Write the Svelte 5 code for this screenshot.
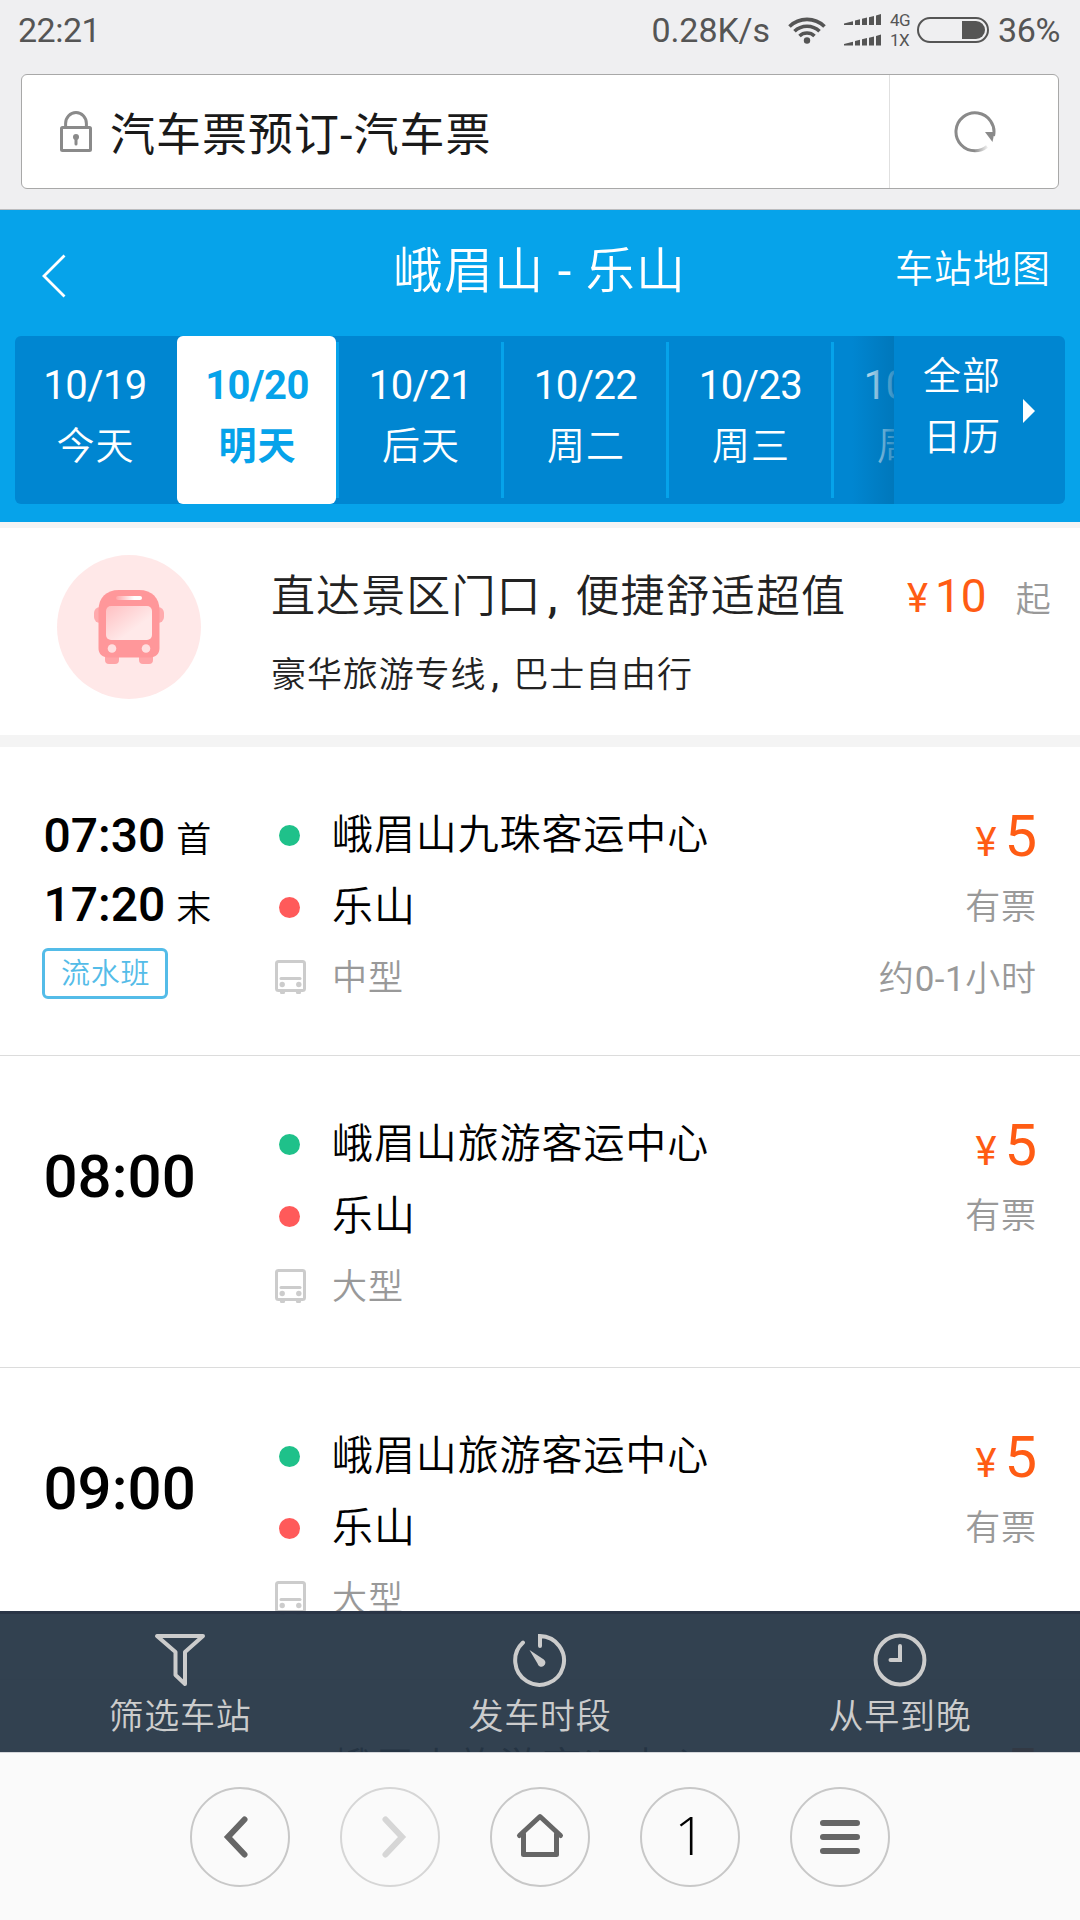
<script>
  const dates = [
    { date: "10/19", day: "今天" },
    { date: "10/20", day: "明天" },
    { date: "10/21", day: "后天" },
    { date: "10/22", day: "周二" },
    { date: "10/23", day: "周三" },
    { date: "10/24", day: "周四" },
  ];
  let activeDate = $state("10/20");

  const trips = [
    {
      first: "07:30",
      last: "17:20",
      tag: "流水班",
      from: "峨眉山九珠客运中心",
      to: "乐山",
      size: "中型",
      price: 5,
      hours: "0-1",
    },
    { time: "08:00", from: "峨眉山旅游客运中心", to: "乐山", size: "大型", price: 5 },
    { time: "09:00", from: "峨眉山旅游客运中心", to: "乐山", size: "大型", price: 5 },
    { time: "10:00", from: "峨眉山旅游客运中心", to: "乐山", size: "大型", price: 5 },
  ];
</script>

<div class="phone">
  <div class="browser-top">
    <div class="status">
      <span class="clock">22:21</span>
      <span class="speed">0.28K/s</span>
      <svg class="wifi" width="38" height="28" viewBox="0 0 38 28">
        <g fill="none" stroke="#555" stroke-width="3.6">
          <path d="M1.5 10.5A25 25 0 0 1 36.5 10.5" />
          <path d="M6.5 15.3A18 18 0 0 1 31.5 15.3" />
          <path d="M11.5 20A11 11 0 0 1 26.5 20" />
        </g>
        <circle cx="19" cy="24.5" r="3.2" fill="#555" />
      </svg>
      <svg class="signal" width="38" height="32" viewBox="0 0 38 32" fill="#555">
        {#each [0, 20.5] as y}
          <path
            transform="translate(0 {y})"
            d="M0 9.5L9 7.2V11H0zM11 6.5L16 5.2V11H11zM18 4.8L23 3.6V11H18zM25 3.2L30 2V11H25zM32 1.5L37 0V11H32z"
          />
        {/each}
      </svg>
      <span class="net"><span>4G</span><span>1X</span></span>
      <span class="battery"><span class="level"></span></span>
      <span class="percent">36%</span>
    </div>
    <div class="address">
      <svg class="lock" width="32" height="41" viewBox="0 0 32 41" fill="none" stroke="#8a8a8a" stroke-width="3">
        <path d="M5.6 16V12.5a10.4 11 0 0 1 20.8 0V16" />
        <rect x="1.5" y="16.5" width="29" height="23" rx="1" />
        <circle cx="16" cy="26" r="3" fill="#8a8a8a" stroke="none" />
        <path d="M16 26v7" stroke-linecap="round" />
      </svg>
      <span class="page-title">汽车票预订-汽车票</span>
      <button class="reload" aria-label="刷新">
        <svg width="42" height="42" viewBox="0 0 42 42">
          <defs>
            <linearGradient id="tail" x1="20" y1="0" x2="34" y2="0" gradientUnits="userSpaceOnUse">
              <stop offset="0" stop-color="#8a8a8a" />
              <stop offset="1" stop-color="#8a8a8a" stop-opacity="0.1" />
            </linearGradient>
          </defs>
          <path d="M39.5 25A19 19 0 1 0 21 39.8" fill="none" stroke="#8a8a8a" stroke-width="3" />
          <path d="M21 39.8A19 19 0 0 0 33 35.5" fill="none" stroke="url(#tail)" stroke-width="3" />
          <path d="M31 21H40.5L38.5 31z" fill="#8a8a8a" />
        </svg>
      </button>
    </div>
  </div>

  <div class="header">
    <div class="nav">
      <svg class="back" width="24" height="44" viewBox="0 0 24 44" fill="none" stroke="#fff" stroke-width="2.8">
        <path d="M22.5 1.5L2 22L22.5 42.5" />
      </svg>
      <h1>峨眉山 <span class="dash">-</span> 乐山</h1>
      <span class="map">车站地图</span>
    </div>
    <div class="dates">
      <div class="tabs">
        {#each dates as item (item.date)}
          <button
            class="tab"
            class:active={item.date === activeDate}
            onclick={() => (activeDate = item.date)}
          >
            <span class="label">
              <span class="date">{item.date}</span>
              <span class="day">{item.day}</span>
            </span>
            <i class="line"></i>
          </button>
        {/each}
        <div class="fade"></div>
      </div>
      <div class="calendar">
        <span>全部<br />日历</span>
        <i class="arrow"></i>
      </div>
    </div>
  </div>

  <div class="promo">
    <svg class="promo-icon" width="144" height="144" viewBox="0 0 144 144">
      <defs>
        <linearGradient id="glass" x1="0" y1="0" x2="1" y2="1">
          <stop offset="0" stop-color="#ffc0c2" />
          <stop offset="0.65" stop-color="#ffe9e9" />
        </linearGradient>
        <linearGradient id="plate">
          <stop offset="0" stop-color="#ffa5a8" />
          <stop offset="0.7" stop-color="#fff" />
        </linearGradient>
      </defs>
      <circle cx="72" cy="72" r="72" fill="#ffe8e8" />
      <rect x="37" y="52" width="70" height="16" rx="6" fill="#ffaaad" />
      <path d="M48 98h14v7a4 4 0 0 1-4 4h-6a4 4 0 0 1-4-4zM82 98h14v7a4 4 0 0 1-4 4h-6a4 4 0 0 1-4-4z" fill="#ffa3a6" />
      <path d="M62 35h20c13 0 20.500 8 20.500 20v38c0 6-4 9.500-9.500 9.500H51c-5.500 0-9.500-3.500-9.500-9.500V55c0-12 7.500-20 20.500-20z" fill="#ff979a" />
      <rect x="59" y="41" width="26" height="4" rx="2" fill="url(#plate)" />
      <rect x="49" y="51" width="46" height="34" rx="5" fill="url(#glass)" />
      <circle cx="55" cy="93.500" r="4.300" fill="#ffdfe0" />
      <circle cx="89" cy="93.500" r="4.300" fill="#ffdfe0" />
    </svg>
    <div class="promo-text">
      <p class="promo-title">直达景区门口<span class="comma">,</span>便捷舒适超值</p>
      <p class="promo-sub">豪华旅游专线<span class="comma">,</span>巴士自由行</p>
    </div>
    <div class="promo-price">
      <span class="yen">¥</span><span class="amount">10</span><span class="from">起</span>
    </div>
  </div>

  <div class="list">
    {#each trips as trip, i (i)}
      <div class="trip">
        <div class="times">
          {#if trip.time}
            <div class="time">{trip.time}</div>
          {:else}
            <div class="range">{trip.first}<small>首</small></div>
            <div class="range">{trip.last}<small>末</small></div>
            <span class="tag">{trip.tag}</span>
          {/if}
        </div>
        <div class="route">
          <div class="stop"><i class="dot green"></i>{trip.from}</div>
          <div class="stop"><i class="dot red"></i>{trip.to}</div>
          <div class="stop size">
            <svg width="31" height="35" viewBox="0 0 31 35" fill="none" stroke="#ccc" stroke-width="3">
              <rect x="1.500" y="1.500" width="28" height="29" rx="2" />
              <path d="M6 18.500h19" stroke-linecap="round" />
              <g fill="#ccc" stroke="none">
                <circle cx="7.200" cy="24.500" r="2.700" />
                <circle cx="23.800" cy="24.500" r="2.700" />
                <path d="M4.500 31h6l-1 3h-4zM20.500 31h6l-1 3h-4z" />
              </g>
            </svg>
            {trip.size}
          </div>
        </div>
        <div class="fare">
          <div class="price"><span class="yen">¥</span>{trip.price}</div>
          <div class="note">有票</div>
          {#if trip.hours}
            <div class="note">约<span class="hours">{trip.hours}</span>小时</div>
          {/if}
        </div>
      </div>
    {/each}

    <div class="toolbar">
      <div class="tool">
        <svg width="54" height="54" viewBox="0 0 54 54" fill="none" stroke="#ccc" stroke-width="4" stroke-linejoin="round">
          <path d="M4 3H50L32 19V51L22.500 42V19z" />
        </svg>
        筛选车站
      </div>
      <div class="tool">
        <svg width="54" height="54" viewBox="0 0 54 54" fill="none" stroke="#ccc" stroke-width="4" stroke-linecap="round">
          <path d="M27 13V3A24.400 24.400 0 1 1 10 9.500" />
          <path d="M16.500 17L30.800 26.500A4 4 0 1 1 24.500 30.500z" fill="#ccc" stroke="none" />
        </svg>
        发车时段
      </div>
      <div class="tool">
        <svg width="54" height="54" viewBox="0 0 54 54" fill="none" stroke="#ccc" stroke-width="4" stroke-linecap="round">
          <circle cx="27" cy="27" r="24.400" />
          <path d="M27 13V27H17.500" />
        </svg>
        从早到晚
      </div>
    </div>
  </div>

  <div class="browser-bottom">
    <button class="round" aria-label="后退">
      <svg width="60" height="60" viewBox="0 0 60 60" fill="none" stroke="#666" stroke-width="6" stroke-linecap="round">
        <path d="M34.500 12.500L18 30L34.500 47.500" />
      </svg>
    </button>
    <button class="round disabled" aria-label="前进">
      <svg width="60" height="60" viewBox="0 0 60 60" fill="none" stroke="#d6d6d6" stroke-width="6" stroke-linecap="round">
        <path d="M25.500 12.500L42 30L25.500 47.500" />
      </svg>
    </button>
    <button class="round" aria-label="主页">
      <svg width="60" height="60" viewBox="0 0 60 60" fill="none" stroke="#666" stroke-width="5" stroke-linecap="round" stroke-linejoin="round">
        <path d="M9.500 28.500L30 9.500L50.500 28.500M13.500 27V47.500H46.500V27" />
      </svg>
    </button>
    <button class="round count">1</button>
    <button class="round" aria-label="菜单">
      <svg width="60" height="60" viewBox="0 0 60 60" fill="none" stroke="#666" stroke-width="6" stroke-linecap="round">
        <path d="M13 16H47M13 30H47M13 44H47" />
      </svg>
    </button>
  </div>
</div>

<style>
  :global(body) {
    margin: 0;
    background: #fff;
  }
  .phone {
    width: 1080px;
    height: 1920px;
    overflow: hidden;
    display: flex;
    flex-direction: column;
    background: #fff;
    color: #000;
    font-family: Roboto, "Noto Sans CJK SC", sans-serif;
  }
  svg {
    display: block;
    flex: none;
  }
  button {
    font: inherit;
    color: inherit;
    background: none;
    border: none;
    padding: 0;
  }

  /* browser chrome */
  .browser-top {
    box-sizing: border-box;
    height: 210px;
    padding: 0 21px;
    background: #efeff1;
    border-bottom: 1px solid #bcbcbe;
  }
  .status {
    height: 60px;
    margin: 0 -3px 14px -3px;
    display: flex;
    align-items: center;
    font-size: 34px;
    line-height: 60px;
    color: #555;
  }
  .clock {
    letter-spacing: -0.5px;
  }
  .speed {
    margin-left: auto;
    margin-right: 18px;
    letter-spacing: -0.1px;
  }
  .signal {
    margin: 0 8px 0 18px;
  }
  .net {
    display: flex;
    flex-direction: column;
    width: 27px;
    font-size: 17px;
    line-height: 20px;
    letter-spacing: -0.5px;
  }
  .battery {
    box-sizing: border-box;
    width: 72px;
    height: 26px;
    padding: 2px;
    border: 2px solid #555;
    border-radius: 13px;
    display: flex;
    justify-content: flex-end;
  }
  .level {
    width: 23px;
    background: #555;
    border-radius: 0 9px 9px 0;
  }
  .percent {
    width: 64px;
    margin-left: 9px;
    letter-spacing: -0.3px;
  }
  .address {
    box-sizing: border-box;
    height: 115px;
    display: flex;
    align-items: center;
    padding-left: 38px;
    background: #fff;
    border: 1px solid #a8a8a8;
    border-radius: 6px;
  }
  .page-title {
    flex: 1;
    margin: -1px 0 0 18px;
    font-size: 45px;
    letter-spacing: 1px;
    color: #1a1a1a;
  }
  .reload {
    width: 169px;
    align-self: stretch;
    display: flex;
    align-items: center;
    justify-content: center;
    padding-left: 1px;
    box-sizing: border-box;
    border-left: 1px solid #e0e0e0;
  }

  /* page header */
  .header {
    box-sizing: border-box;
    height: 318px;
    padding: 0 15px;
    background: #06a3ea;
    border-bottom: 6px solid #f4f4f4;
    color: #fff;
  }
  .nav {
    height: 126px;
    display: grid;
    grid-template-columns: 1fr auto 1fr;
  }
  .back {
    margin: 44px 0 0 27px;
  }
  h1 {
    margin: 0;
    font-size: 49px;
    font-weight: 350;
    line-height: 123px;
    letter-spacing: 1.3px;
  }
  .dash {
    font-weight: 400;
  }
  .map {
    margin-right: 14px;
    justify-self: end;
    font-size: 38px;
    font-weight: 350;
    line-height: 119px;
    letter-spacing: 1px;
  }
  .dates {
    height: 168px;
    display: flex;
    background: #0086d1;
    border-radius: 6px;
  }
  .tabs {
    position: relative;
    width: 879px;
    display: flex;
    overflow: hidden;
  }
  .tab {
    flex: none;
    width: 165px;
    display: flex;
    align-items: center;
  }
  .tab:nth-child(-n + 2) {
    width: 162px;
  }
  .tab:first-child .line {
    visibility: hidden;
  }
  .label {
    box-sizing: border-box;
    flex: 1;
    height: 168px;
    padding: 20px 0 0 1px;
    display: flex;
    flex-direction: column;
    align-items: center;
    border-radius: 6px;
  }
  .line {
    width: 3px;
    height: 156px;
    background: #06a3ea;
  }
  .date {
    font-size: 40px;
    line-height: 60px;
    letter-spacing: -0.6px;
  }
  .day {
    margin-left: 1px;
    font-size: 38px;
    font-weight: 350;
    line-height: 60px;
    letter-spacing: 1px;
  }
  .active .label {
    background: #fff;
    color: #06a3ea;
  }
  .active .date,
  .active .day {
    font-weight: 700;
  }
  .fade {
    position: absolute;
    top: 0;
    right: 0;
    width: 42px;
    height: 168px;
    background: linear-gradient(to right, rgba(0, 116, 182, 0), rgba(0, 116, 182, 0.8));
  }
  .calendar {
    flex: 1;
    display: flex;
    align-items: center;
    padding-left: 29px;
    font-size: 38px;
    font-weight: 350;
    line-height: 61px;
    letter-spacing: 1px;
  }
  .calendar span {
    margin-top: -26px;
  }
  .arrow {
    margin: -18px 0 0 22px;
    border: 12px solid transparent;
    border-left-color: #fff;
    border-right: none;
  }

  /* promotion */
  .promo {
    box-sizing: border-box;
    height: 219px;
    display: flex;
    padding-left: 57px;
    border-bottom: 12px solid #f4f4f4;
    color: #222;
  }
  .promo-icon {
    margin-top: 27px;
  }
  p {
    margin: 0;
    font-weight: 350;
    white-space: nowrap;
  }
  .promo-text {
    width: 636px;
    margin-left: 70px;
    padding-top: 39px;
  }
  .promo-title {
    font-size: 44px;
    line-height: 60px;
    letter-spacing: 1.1px;
  }
  .promo-sub {
    margin-top: 19px;
    font-size: 35px;
    line-height: 60px;
    letter-spacing: 0.9px;
  }
  .comma {
    display: inline-block;
    width: 0.77em;
    font-weight: 500;
    text-indent: 0.14em;
  }
  .promo-price {
    padding-top: 38px;
    line-height: 60px;
    white-space: nowrap;
  }
  .yen {
    font-size: 40px;
    line-height: 1;
    color: #ff5c14;
  }
  .amount {
    margin: 0 29px 0 7px;
    font-size: 46px;
    color: #ff5c14;
  }
  .from {
    font-size: 35px;
    font-weight: 350;
    line-height: 1;
    color: #999;
  }

  /* trips */
  .list {
    position: relative;
    height: 1005px;
    overflow: hidden;
  }
  .trip {
    box-sizing: border-box;
    height: 312px;
    display: flex;
    padding: 52px 43px 0 44px;
    border-bottom: 1px solid #dcdcdc;
  }
  .trip:first-child {
    height: 309px;
  }
  .times {
    width: 235px;
  }
  .time {
    margin-left: -0.5px;
    font-size: 60px;
    font-weight: 500;
    line-height: 70px;
    padding-top: 34px;
  }
  .range {
    margin: 2px 0 0 -0.5px;
    font-size: 48px;
    font-weight: 500;
    line-height: 69px;
  }
  .range + .range {
    margin-top: 0;
  }
  .range small {
    margin-left: 11px;
    font-size: 35px;
    font-weight: 350;
    line-height: 1;
  }
  .tag {
    box-sizing: border-box;
    display: block;
    width: 126px;
    height: 51px;
    margin: 9px 0 0 -2px;
    padding-left: 16px;
    border: 3px solid #54bce8;
    border-radius: 6px;
    font-size: 29px;
    font-weight: 350;
    line-height: 47px;
    letter-spacing: 0.8px;
    color: #54bce8;
  }
  .stop {
    display: flex;
    align-items: center;
    font-size: 41px;
    font-weight: 350;
    line-height: 72px;
    letter-spacing: 0.9px;
    white-space: nowrap;
  }
  .dot {
    width: 21px;
    height: 21px;
    margin-right: 32px;
    border-radius: 50%;
  }
  .green {
    background: #1fc18a;
  }
  .red {
    background: #ff5a5a;
  }
  .size {
    font-size: 35px;
    color: #999;
  }
  .size svg {
    margin: -4px 26px 0 -4px;
  }
  .fare {
    margin-left: auto;
    text-align: right;
  }
  .price {
    padding-top: 1px;
    font-size: 58px;
    line-height: 72px;
    color: #ff5c14;
  }
  .price .yen {
    margin-right: 8px;
  }
  .note {
    font-size: 35px;
    font-weight: 350;
    line-height: 72px;
    letter-spacing: 0.9px;
    color: #999;
  }
  .hours {
    font-weight: 400;
    letter-spacing: 0.5px;
  }

  /* filter bar over the list */
  .toolbar {
    box-sizing: border-box;
    position: absolute;
    left: 0;
    right: 0;
    bottom: 0;
    height: 141px;
    display: grid;
    grid-template-columns: repeat(3, 1fr);
    border-top: 3px solid #2a3546;
    background: rgba(39, 55, 71, 0.95);
  }
  .tool {
    display: flex;
    flex-direction: column;
    align-items: center;
    padding-top: 19px;
    font-size: 35px;
    font-weight: 350;
    line-height: 61px;
    letter-spacing: 0.8px;
    color: #ccc;
  }

  .browser-bottom {
    box-sizing: border-box;
    height: 168px;
    padding-top: 34px;
    display: flex;
    justify-content: center;
    gap: 50px;
    background: #fafafa;
    border-top: 1px solid #d4d6da;
  }
  .round {
    box-sizing: border-box;
    width: 100px;
    height: 100px;
    display: flex;
    align-items: center;
    justify-content: center;
    border: 2px solid #c8c8c8;
    border-radius: 50%;
  }
  .disabled {
    border-color: #d6d6d6;
  }
  .count {
    padding: 0 0 7px;
    font-family: "Open Sans", sans-serif;
    font-size: 54px;
    font-weight: 300;
  }
</style>
